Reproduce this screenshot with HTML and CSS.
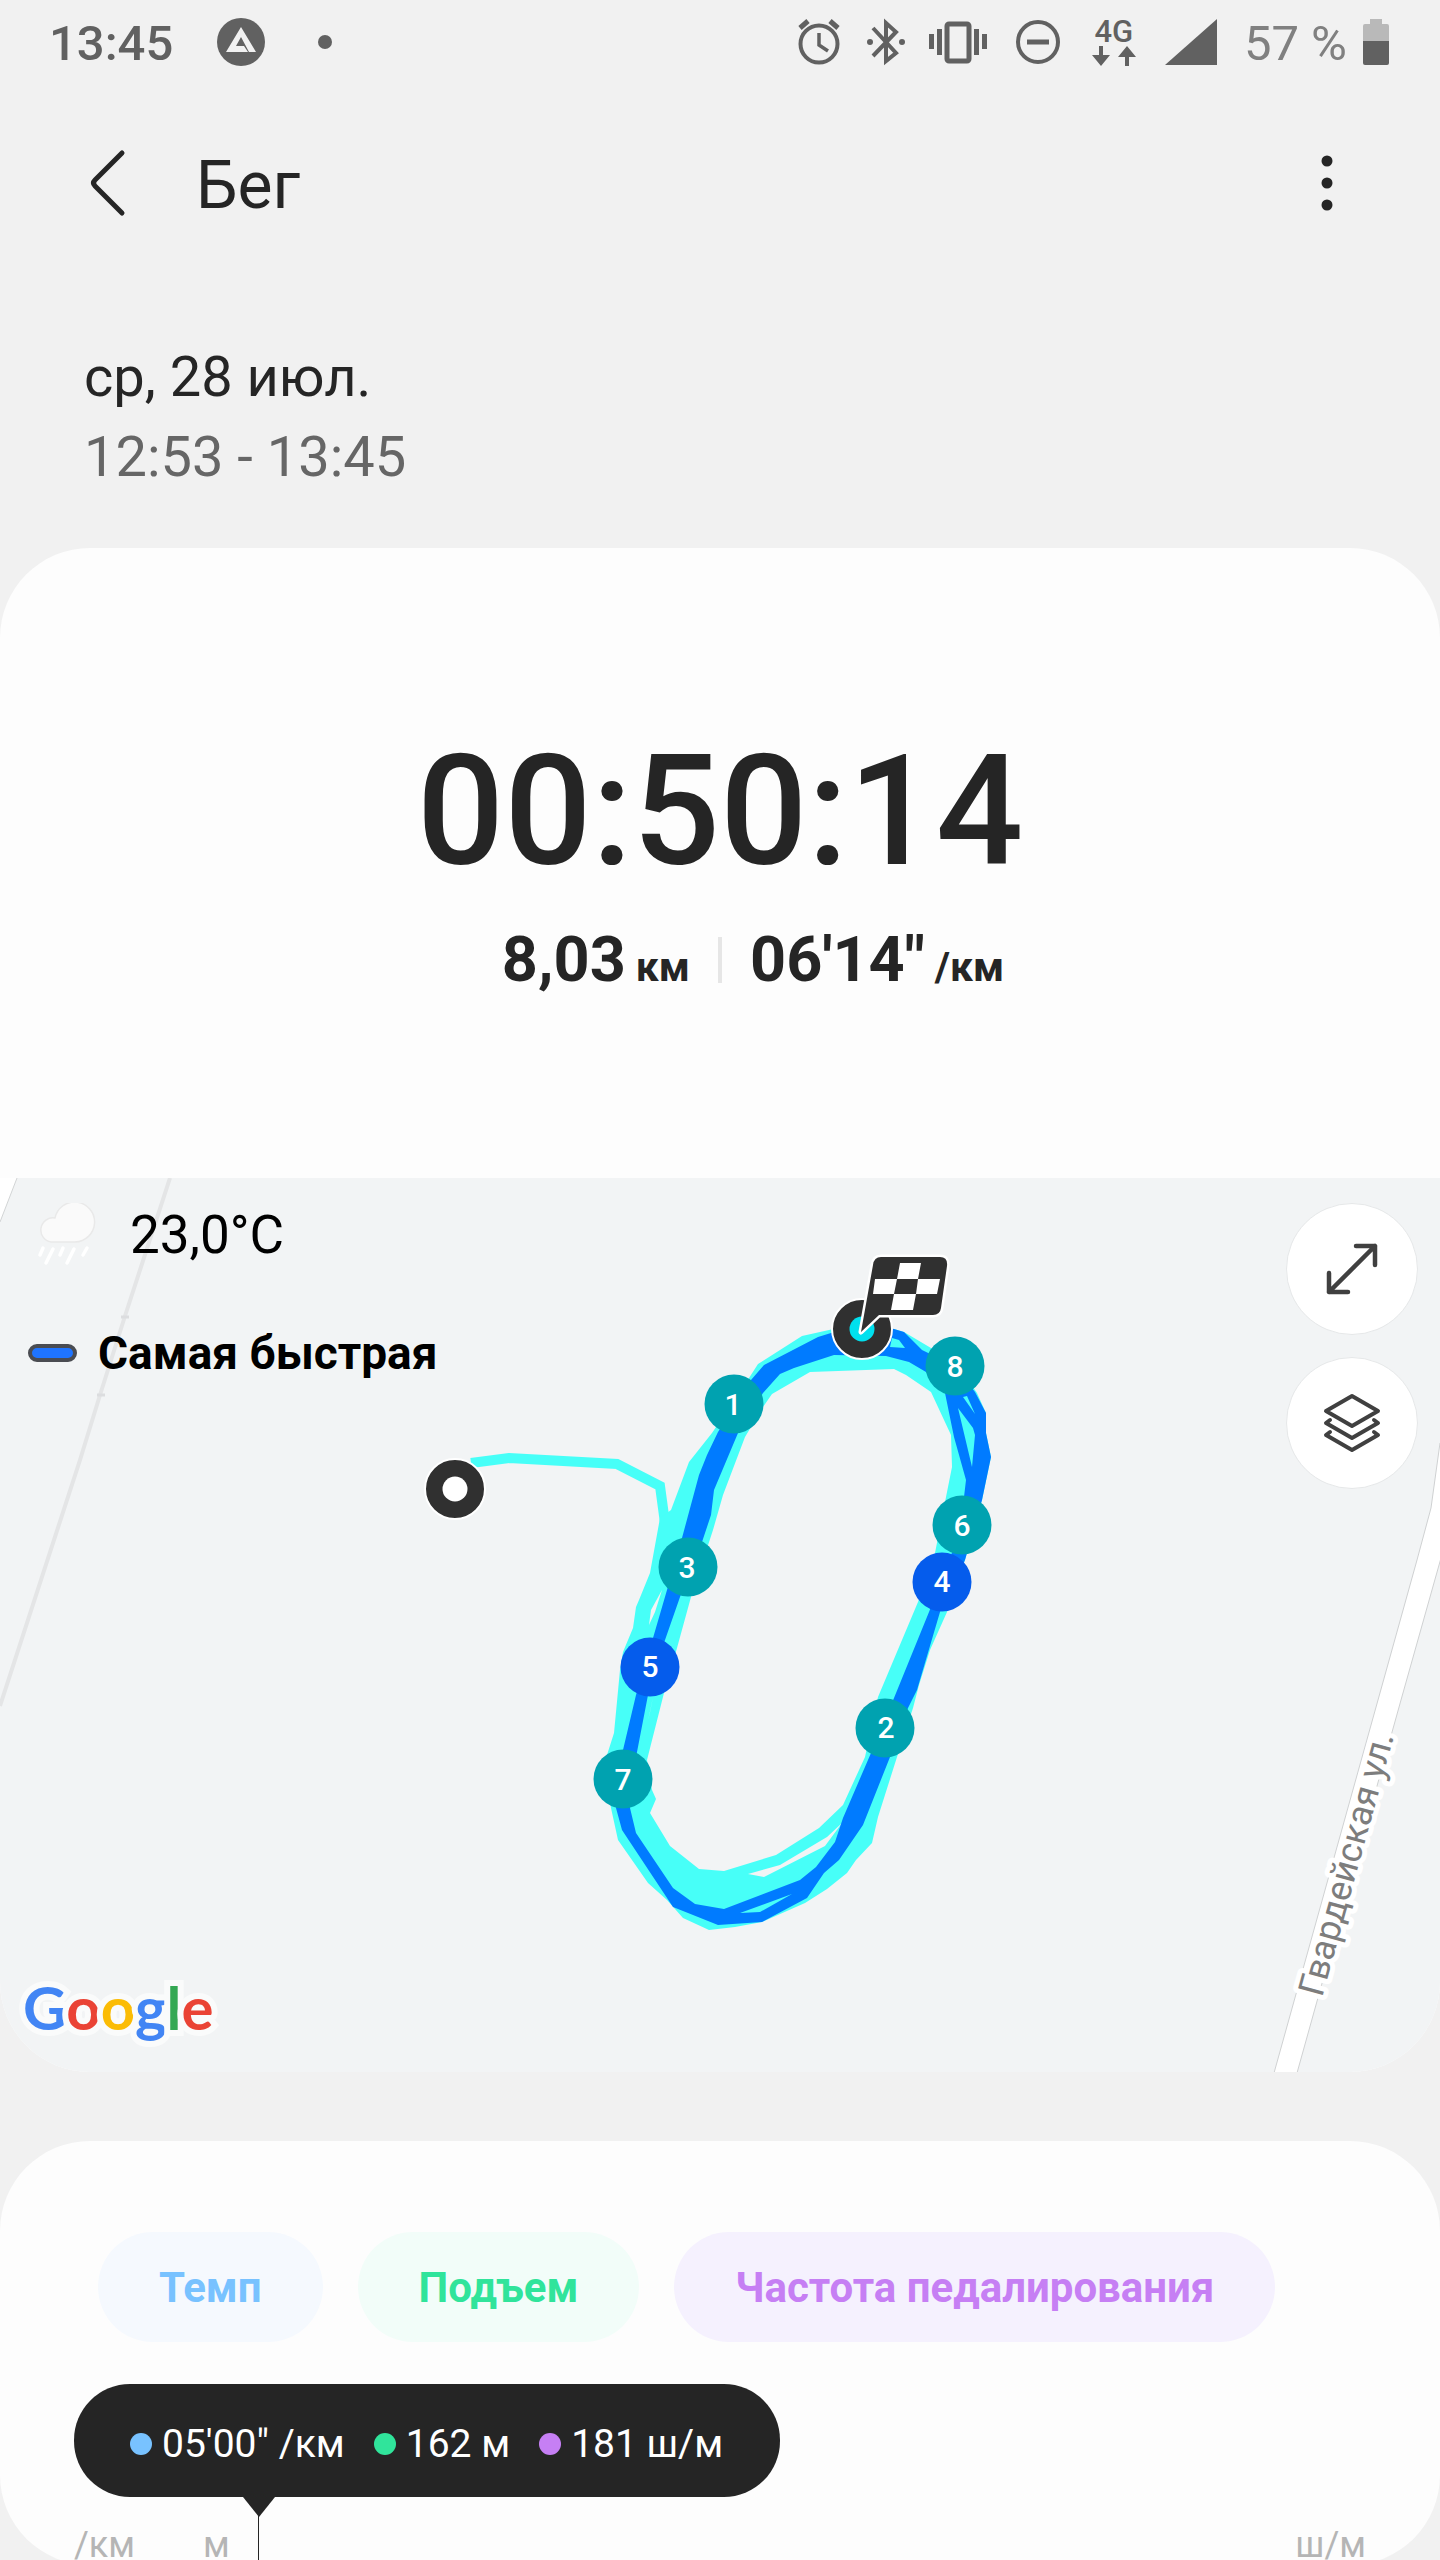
FILE: index.html
```html
<!DOCTYPE html>
<html lang="ru">
<head>
<meta charset="utf-8">
<meta name="viewport" content="width=device-width, initial-scale=1">
<title>Бег</title>
<link rel="stylesheet" href="styles.css">
</head>
<body>
<div class="screen">
  <div class="status">
    <div class="status-left">
      <span class="clock">13:45</span>
      <svg width="48" height="48" viewBox="0 0 48 48"><circle cx="24" cy="24" r="24" fill="#616161"/><path d="M9 34 24 9l15 25h-7L24 19l-5 9h8l4 6z" fill="#f1f1f1"/></svg>
      <span class="status-dot"></span>
    </div>
    <div class="status-right">
      <svg class="i-alarm" width="42" height="48" viewBox="0 0 42 48" fill="none" stroke="#616161"><circle cx="21" cy="26" r="18.500" stroke-width="4"/><path d="M21 15v12l9 6" stroke-width="3.500"/><path d="M2 10l8-7M40 10l-8-7" stroke-width="5"/></svg>
      <svg class="i-bt" width="38" height="48" viewBox="0 0 38 48" fill="none" stroke="#616161" stroke-width="4"><path d="M6 10 29 35 19 43V5l10 9L6 38"/><circle cx="3" cy="24" r="3" fill="#616161" stroke="none"/><circle cx="35" cy="24" r="3" fill="#616161" stroke="none"/></svg>
      <svg class="i-vib" width="58" height="48" viewBox="0 0 58 48"><rect x="18" y="6" width="22" height="37" rx="2" fill="none" stroke="#616161" stroke-width="5"/><path d="M0 16h5v15H0zM8 11h5v26H8zM45 11h5v26h-5zM53 16h5v15h-5z" fill="#616161"/></svg>
      <svg class="i-dnd" width="46" height="48" viewBox="0 0 46 48" fill="none" stroke="#616161" stroke-width="4"><circle cx="23" cy="24" r="20"/><path d="M12 24h22" stroke-width="5"/></svg>
      <div class="net"><span>4G</span><svg width="46" height="20" viewBox="0 0 46 20" fill="#616161"><path d="M8 0h4v9h7L10 20 1 9h7zM34 20h4v-9h7L36 0 27 11h7z"/></svg></div>
      <svg class="i-sig" width="52" height="48" viewBox="0 0 52 48"><path d="M52 1v46H0z" fill="#616161"/></svg>
      <span class="percent">57 %</span>
      <svg width="26" height="48" viewBox="0 0 26 48"><path d="M7 1h12v5h5a2 2 0 0 1 2 2v15H0V8a2 2 0 0 1 2-2h5z" fill="#b9b9b9"/><path d="M0 23h26v22a2 2 0 0 1-2 2H2a2 2 0 0 1-2-2z" fill="#616161"/></svg>
    </div>
  </div>

  <header class="header">
    <button class="icon-btn" aria-label="Назад"><svg width="40" height="68" viewBox="0 0 40 68"><path d="M34 4 7 31q-3 3 0 6l27 27" fill="none" stroke="#252525" stroke-width="5" stroke-linecap="round"/></svg></button>
    <h1>Бег</h1>
    <button class="icon-btn" aria-label="Ещё"><svg width="16" height="68" viewBox="0 0 16 68" fill="#252525"><circle cx="8" cy="12" r="5.500"/><circle cx="8" cy="34" r="5.500"/><circle cx="8" cy="56" r="5.500"/></svg></button>
  </header>

  <div class="dates">
    <p>ср, 28 июл.</p>
    <p class="muted">12:53 - 13:45</p>
  </div>

  <section class="card">
    <div class="timer">00:50:14</div>
    <div class="stats">
      <div class="stat stat-end">8,03<small>км</small></div>
      <span class="divider"></span>
      <div class="stat">06'14"<small>/км</small></div>
    </div>
    <div class="map">
      <svg class="map-art" viewBox="0 1178 1440 894">
        <path d="M0 1178h17L0 1222z" fill="#fff"/><path d="M17 1178 0 1222" stroke="#d2d4d5"/>
        <path d="M170 1178 125 1316 100 1395 80 1460 0 1706" fill="none" stroke="#e4e5e6" stroke-width="4"/>
        <path d="M121 1317h8M97 1395h8" stroke="#dcdddf" stroke-width="3"/>
        <path d="M1440 1443 1431 1508 1417 1560 1378 1700 1274 2073H1297L1401 1700 1441 1558" fill="#fff" stroke="#cfd1d2"/>
        <text class="street" transform="translate(1322 1998) rotate(-74.600)">Гвардейская ул.</text>
        <path d="M471 1463 509 1458 617 1464 660 1486 665 1523" fill="none" stroke="#47fff8" stroke-width="10"/>
        <path fill="#47fff8" fill-rule="evenodd" d="M862 1322 829 1330 802 1336 758 1364 749 1378 712 1433 689 1462 671 1510 660 1518 650 1573 639 1600 636 1607 633 1628 623 1652 620 1670 614 1733 607 1755 608 1790 611 1808 618 1840 648 1883 667 1900 683 1918 709 1930 735 1927 762 1922 805 1903 827 1889 847 1873 856 1860 872 1843 878 1817 897 1757 913 1708 919 1685 930 1650 947 1612 965 1560 982 1500 991 1457 986 1433 986 1413 977 1393 960 1368 931 1348 904 1332 894 1329z
          M810 1372 894 1369 906 1375 931 1392 951 1435 952 1467 946 1497 935 1553 918 1602 878 1697 865 1757 843 1805 819 1828 776 1855 724 1871 699 1869 670 1846 650 1813 656 1799 652 1790 647 1760 664 1693 677 1648 691 1597 713 1530 723 1495 745 1437 763 1407 772 1394z
          M748 1874 764 1877 825 1846 842 1823 827 1837 780 1865z M662 1590 651 1610 649 1625 655 1612z M653 1697 648 1721 650 1712z"/>
        <path fill="#007bff" fill-rule="evenodd" d="M862 1324 831 1333 818 1337 764 1365 751 1380 718 1432 707 1455 699 1475 682 1538 667 1590 653 1638 636 1695 623 1750 615 1790 616 1808 622 1830 673 1907 718 1925 762 1922 807 1898 824 1873 839 1860 863 1825 890 1757 908 1708 917 1690 940 1612 965 1560 982 1500 991 1457 986 1433 986 1413 975 1392 955 1366 922 1350 904 1332 894 1329z
          M834 1355 886 1356 909 1362 926 1372 945 1393 954 1437 966 1480 964 1497 955 1545 929 1612 894 1698 871 1753 843 1818 835 1842 816 1867 800 1880 724 1909 695 1904 673 1888 636 1833 630 1808 630 1785 637 1752 648 1695 665 1640 680 1597 702 1542 711 1515 714 1490 738 1433 763 1393 780 1374 794 1368z"/>
        <path fill="#47fff8" d="M958 1408 973 1428 975 1435 972 1467zM963 1397 967 1396 975 1414zM892 1338 899 1340 905 1348 890 1347zM740 1913 792 1894 760 1912z"/>
        <circle cx="455" cy="1489" r="30" fill="#303030" stroke="#fff" stroke-width="2"/><circle cx="455" cy="1489" r="12.500" fill="#fff"/>
        <circle cx="862" cy="1329" r="30" fill="#303030" stroke="#fff" stroke-width="2"/><circle cx="862" cy="1329" r="12.500" fill="#00e0ee"/>
        <path d="M861 1332 873 1265q1-8 8-8h59q8 0 7 9l-6 42q-1 7-8 7h-54z" fill="#303030" stroke="#fff" stroke-width="5" stroke-linejoin="round" paint-order="stroke"/>
        <path fill="#fff" d="M900 1263h21l-3 16h-21zM875 1279h22l-3 15h-21zM918 1279h22l-3 15h-21zM894 1294h22l-3 16h-22z"/>
        <g class="km">
          <circle cx="734" cy="1404" r="29.500"/><circle cx="955" cy="1366" r="29.500"/><circle cx="962" cy="1525" r="29.500"/><circle class="fast" cx="942" cy="1582" r="29.500"/><circle cx="688" cy="1567" r="29.500"/><circle class="fast" cx="650" cy="1667" r="29.500"/><circle cx="623" cy="1779" r="29.500"/><circle cx="885" cy="1728" r="29.500"/>
          <text x="733" y="1415">1</text><text x="955" y="1377">8</text><text x="962" y="1536">6</text><text x="942" y="1592">4</text><text x="687" y="1578">3</text><text x="650" y="1677">5</text><text x="623" y="1790">7</text><text x="886" y="1738">2</text>
        </g>
      </svg>
      <div class="map-ui">
        <div class="map-info">
          <div class="weather">
            <svg width="60" height="64" viewBox="0 0 60 64"><path d="M15 39a12 12 0 1 1 4-24 20 20 0 1 1 20 24z" fill="#fafafa" stroke="#e9e9e9" stroke-width="1.500"/><path d="M7 45l-3 7M17 46l-7 14M27 45l-3 7M38 46l-7 14M51 45l-4 7" stroke="#fff" stroke-width="3.500" stroke-linecap="round"/></svg>
            <span>23,0°C</span>
          </div>
          <div class="legend"><i></i><span>Самая быстрая</span></div>
        </div>
        <div class="map-buttons">
          <button aria-label="Развернуть карту"><svg width="56" height="56" viewBox="0 0 56 56" fill="none" stroke="#404040" stroke-width="4.500" stroke-linecap="round" stroke-linejoin="round"><path d="M32 5h19v19M5 32v19h19M5 51 51 5"/></svg></button>
          <button aria-label="Слои карты"><svg width="60" height="62" viewBox="0 0 60 62" fill="none" stroke="#404040" stroke-width="4" stroke-linecap="round" stroke-linejoin="round"><path d="M30 4 56 19 30 34 4 19zM8 28l-4 3 26 15 26-15-4-3M8 40l-4 3 26 15 26-15-4-3"/></svg></button>
        </div>
      </div>
      <div class="google"><span class="b">G</span><span class="r">o</span><span class="y">o</span><span class="b">g</span><span class="g">l</span><span class="r">e</span></div>
    </div>
  </section>

  <section class="card chart">
    <div class="chips">
      <button class="chip pace">Темп</button>
      <button class="chip climb">Подъем</button>
      <button class="chip cadence">Частота педалирования</button>
    </div>
    <div class="tooltip">
      <span class="pace">05'00" /км</span>
      <span class="climb">162 м</span>
      <span class="cadence">181 ш/м</span>
    </div>
    <div class="axis"><span>/км</span><span>м</span><span class="axis-end">ш/м</span></div>
  </section>
</div>
</body>
</html>
```
FILE: styles.css
```css
* { box-sizing: border-box; }
body { margin: 0; background: #f1f1f1; color: #252525; font-family: Roboto, "Noto Sans", sans-serif; }
h1, p { margin: 0; font-weight: 400; }
button { margin: 0; padding: 0; border: 0; background: none; font: inherit; color: inherit; }
svg { display: block; flex: none; }
.screen { height: 100vh; overflow: hidden; }

.status { display: flex; justify-content: space-between; height: 84px; padding: 0 51px 0 49px; font-size: 49px; color: #616161; }
.status-left, .status-right { display: flex; align-items: center; }
.clock { margin-right: 44px; padding-top: 3px; font-weight: 500; }
.status-dot { width: 14px; height: 14px; margin-left: 53px; border-radius: 50%; background: #616161; }
.i-alarm { margin-right: 27px; }
.i-bt { margin-right: 24px; }
.i-vib { margin-right: 28px; }
.i-dnd { margin-right: 30px; }
.net { display: flex; flex-direction: column; align-items: center; width: 46px; margin-right: 28px; font-size: 31px; line-height: 28px; font-weight: 500; }
.i-sig { margin-right: 27px; }
.percent { margin-right: 16px; padding-top: 3px; color: #808080; }

.header { display: flex; align-items: center; height: 197px; padding: 0 105px 0 88px; }
.header h1 { flex: 1; margin-left: 68px; padding-top: 6px; font-size: 66px; line-height: 80px; }
.dates { padding: 56px 84px 51px; font-size: 56px; line-height: 80px; }
.muted { color: #666; }

.card { border-radius: 90px; background: #fdfdfd; overflow: hidden; }
.timer { padding-top: 184px; font-size: 154px; line-height: 160px; font-weight: 500; text-align: center; }
.stats { display: grid; grid-template-columns: 1fr 4px 1fr; align-items: center; gap: 28px; height: 286px; padding: 28px 0 178px; }
.stat { font-size: 63px; line-height: 80px; font-weight: 700; }
.stat-end { text-align: right; }
.stat small { margin-left: 10px; font-size: 41px; line-height: 40px; }
.divider { height: 46px; background: #e6e6e6; }

.map { position: relative; background: #f2f4f5; }
.map-art { width: 100%; height: auto; }
.street { fill: #7d7d7d; stroke: #fff; stroke-width: 10px; stroke-linejoin: round; paint-order: stroke; font-size: 36px; }
.km { fill: #00a2b0; }
.km .fast { fill: #055cec; }
.km text { fill: #fff; font-size: 30px; font-weight: 500; text-anchor: middle; }
.map-ui { position: absolute; inset: 0; display: flex; justify-content: space-between; padding: 25px 22px 0 28px; color: #000; }
.weather, .legend { display: flex; align-items: center; }
.weather { height: 64px; margin-left: 8px; font-size: 53px; }
.weather span { margin-left: 34px; }
.legend { height: 60px; margin-top: 56px; font-size: 46px; font-weight: 700; }
.legend i { width: 49px; height: 18px; margin-right: 21px; border: 4px solid #4a4c52; border-radius: 9px; background: #1f74ff; }
.map-buttons { display: flex; flex-direction: column; gap: 22px; }
.map-buttons button { display: grid; place-items: center; width: 132px; height: 132px; border: 1px solid #e6e8e9; border-radius: 50%; background: #fff; }
.google { position: absolute; left: 23px; bottom: 29px; font: 700 60px/72px Lato, sans-serif; -webkit-text-stroke: 12px #fafbfb; paint-order: stroke; }
.google span { paint-order: stroke; }
.b { color: #4285f4; } .r { color: #ea4335; } .y { color: #fbbc05; } .g { color: #34a853; }

.chart { margin-top: 69px; padding: 91px 74px 0; height: 424px; }
.chips { display: flex; gap: 35px; padding-left: 24px; }
.chip { height: 110px; padding: 0 61px; border-radius: 55px; font-size: 42px; font-weight: 700; white-space: nowrap; }
.chip.pace { background: #f5f9fe; color: #78c2ff; }
.chip.climb { background: #f2fdf9; color: #30e49b; }
.chip.cadence { background: #f5f1fe; color: #c67ff4; }
.tooltip { position: relative; display: flex; align-items: center; gap: 29px; width: max-content; height: 113px; margin-top: 42px; padding: 6px 57px 0 56px; border-radius: 56px; background: #252525; color: #fff; font-size: 39px; }
.tooltip span { display: flex; align-items: center; gap: 10px; }
.tooltip span::before { content: ""; width: 22px; height: 22px; border-radius: 50%; background: #78c2ff; }
.tooltip .climb::before { background: #30e49b; }
.tooltip .cadence::before { background: #c67ff4; }
.tooltip::before { content: ""; position: absolute; top: 100%; left: 169px; border: solid transparent; border-width: 20px 16px 0; border-top-color: #252525; }
.tooltip::after { content: ""; position: absolute; top: 100%; left: 184px; width: 1px; height: 80px; background: #252525; }
.axis { display: flex; margin-top: 30px; font-size: 36px; line-height: 36px; color: #b5b5b5; }
.axis span { margin-right: 68px; }
.axis .axis-end { margin: 0 0 0 auto; }
```
